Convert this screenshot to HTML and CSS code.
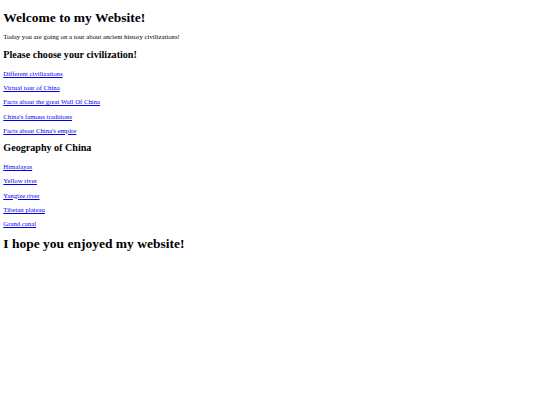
FILE: index.html
```html
<!DOCTYPE html>
<html>
<head>
<meta charset="utf-8">
<title>Welcome</title>
<link rel="stylesheet" href="styles.css">
</head>
<body class="page">
<h1 class="title">Welcome to my Website!</h1>
<p class="text">Today you are going on a tour about ancient history civilizations!</p>
<h2 class="subtitle">Please choose your civilization!</h2>
<p class="text"><a class="link" href="#">Different civilizations</a></p>
<p class="text"><a class="link" href="#">Virtual tour of China</a></p>
<p class="text"><a class="link" href="#">Facts about the great Wall Of China</a></p>
<p class="text"><a class="link" href="#">China's famous traditions</a></p>
<p class="text"><a class="link" href="#">Facts about China's empire</a></p>
<h2 class="subtitle">Geography of China</h2>
<p class="text"><a class="link" href="#">Himalayas</a></p>
<p class="text"><a class="link" href="#">Yellow river</a></p>
<p class="text"><a class="link" href="#">Yangtze river</a></p>
<p class="text"><a class="link" href="#">Tibetan plateau</a></p>
<p class="text"><a class="link" href="#">Grand canal</a></p>
<h1 class="title title-end">I hope you enjoyed my website!</h1>
</body>
</html>
```
FILE: styles.css
```css
html {
  background: #ffffff;
}
.page {
  margin: 3.32px;
  font-family: "Liberation Serif", "Times New Roman", serif;
  font-size: 6.75px;
  line-height: 7.6px;
  color: #000000;
}
.title {
  font-size: 13.5px;
  line-height: 15.4px;
  font-weight: bold;
  margin: 6.7px 0 7.9px;
}
.title-end {
  margin-top: 8.2px;
}
.subtitle {
  font-size: 10.1px;
  line-height: 11.6px;
  font-weight: bold;
  margin: 7.9px 0 9.3px;
}
.text {
  margin: 6.7px 0;
}
.link {
  color: #0000ee;
  text-decoration: underline;
}
```
